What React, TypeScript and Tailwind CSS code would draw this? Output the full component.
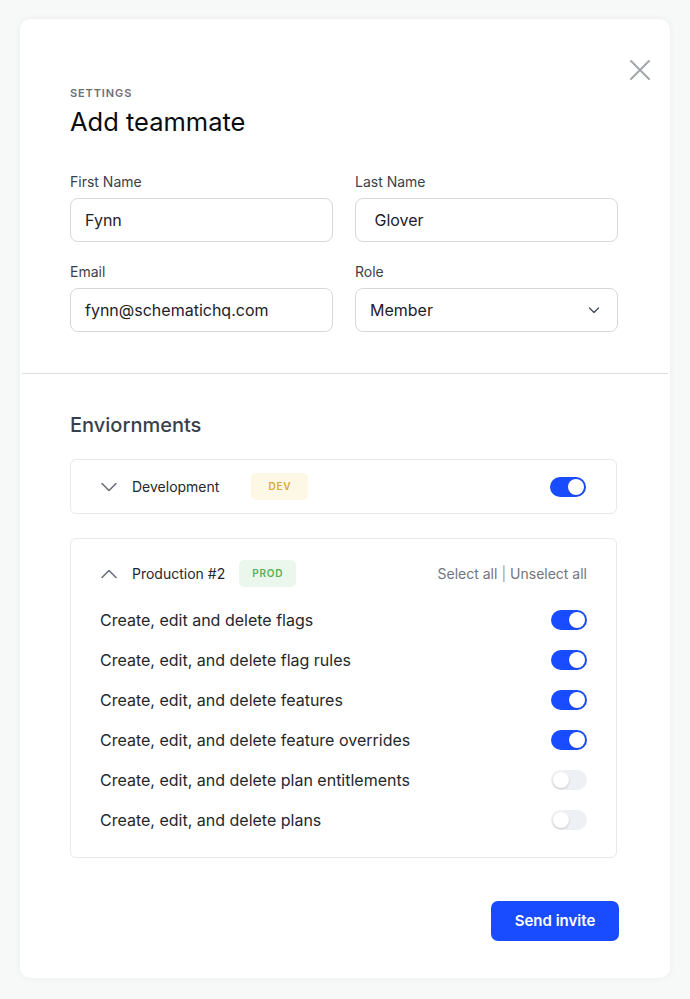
import React, { useState } from "react";

const font = { fontFamily: "Inter, 'Noto Sans', sans-serif" };

// --- Small pieces ---
const Toggle = ({ on, onClick }: { on: boolean; onClick: () => void }) => (
  <button
    onClick={onClick}
    className={`relative flex h-[20px] w-[36px] shrink-0 items-center rounded-full px-[2px] transition-colors ${
      on ? "bg-[#1a4cff] justify-end" : "bg-[#eef0f3] justify-start"
    }`}
  >
    <span className="block h-[16px] w-[16px] rounded-full bg-white shadow-[0_1px_2px_rgba(0,0,0,0.18)]" />
  </button>
);

const Chevron = ({ up }: { up?: boolean }) => (
  <svg width="18" height="18" viewBox="0 0 18 18" fill="none" className="shrink-0">
    <path
      d={up ? "M2 12.5 L9 5.5 L16 12.5" : "M2 5.5 L9 12.5 L16 5.5"}
      stroke="#6b6f7b"
      strokeWidth="1.6"
      strokeLinecap="round"
      strokeLinejoin="round"
    />
  </svg>
);

const Field = ({ label, value, select }: { label: string; value: string; select?: boolean }) => (
  <div className="flex flex-col gap-[6px]">
    <label className="text-[14px] leading-[20px] text-[#3b3f4a]">{label}</label>
    <div className="flex h-[44px] items-center justify-between rounded-[8px] border border-[#d6d8dc] bg-white pl-[14px] pr-[16px] text-[16px] text-[#1f2128]">
      <span className="whitespace-pre">{value}</span>
      {select && (
        <svg width="14" height="14" viewBox="0 0 14 14" fill="none">
          <path d="M2.5 5 L7 9.5 L11.5 5" stroke="#4b5060" strokeWidth="1.4" strokeLinecap="round" strokeLinejoin="round" />
        </svg>
      )}
    </div>
  </div>
);

const permissions = [
  "Create, edit and delete flags",
  "Create, edit, and delete flag rules",
  "Create, edit, and delete features",
  "Create, edit, and delete feature overrides",
  "Create, edit, and delete plan entitlements",
  "Create, edit, and delete plans",
];

// --- Main ---
export default function App() {
  const [devOn, setDevOn] = useState(true);
  const [perms, setPerms] = useState([true, true, true, true, false, false]);

  const flip = (i: number) => setPerms((p) => p.map((v, j) => (j === i ? !v : v)));

  return (
    <div style={font} className="min-h-screen bg-[#f7f8f8] px-[20px] pt-[19px] pb-[21px]">
      <div className="relative rounded-[10px] bg-white shadow-[0_0_6px_rgba(0,0,0,0.06)]">
        {/* close */}
        <button className="absolute right-[19px] top-[40px]">
          <svg width="22" height="22" viewBox="0 0 22 22" fill="none">
            <path d="M2 2 L20 20 M20 2 L2 20" stroke="#a3a6ad" strokeWidth="2" strokeLinecap="round" />
          </svg>
        </button>

        {/* header + form */}
        <div className="pl-[50px] pr-[52px] pt-[66px] pb-[41px]">
          <div className="text-[11px] font-semibold leading-[16px] tracking-[0.08em] text-[#6b6f78]">SETTINGS</div>
          <h1 className="mt-[5px] text-[25.5px] font-normal leading-[32px] text-[#0b0c0f]">Add teammate</h1>

          <div className="mt-[34px] grid grid-cols-2 gap-x-[22px] gap-y-[20px]">
            <Field label="First Name" value="Fynn" />
            <Field label="Last Name" value=" Glover" />
            <Field label="Email" value="fynn@schematichq.com" />
            <Field label="Role" value="Member" select />
          </div>
        </div>

        <div className="mx-[2px] h-px bg-[#dcdee1]" />

        {/* environments */}
        <div className="pl-[50px] pr-[53px] pt-[37px] pb-[37px]">
          <h2 className="text-[20px] font-medium leading-[28px] text-[#3a3f4d]">Enviornments</h2>

          <div className="mt-[20px] flex h-[55px] items-center rounded-[6px] border border-[#e8e9eb] pl-[29px] pr-[30px]">
            <Chevron />
            <span className="ml-[14px] text-[14px] text-[#25272d]">Development</span>
            <span className="ml-[32px] rounded-[5px] bg-[#fdf8e6] px-[17px] py-[6px] text-[10px] font-semibold tracking-[0.08em] text-[#d4aa3c]">
              DEV
            </span>
            <div className="ml-auto">
              <Toggle on={devOn} onClick={() => setDevOn(!devOn)} />
            </div>
          </div>

          <div className="mt-[24px] rounded-[6px] border border-[#e8e9eb] pl-[29px] pr-[29px] pt-[22px] pb-[17px]">
            <div className="flex h-[25px] items-center">
              <Chevron up />
              <span className="ml-[14px] text-[14px] text-[#25272d]">Production #2</span>
              <span className="ml-[14px] rounded-[5px] bg-[#ebf7ec] px-[13px] py-[6px] text-[10px] font-semibold tracking-[0.08em] text-[#4fb25a]">
                PROD
              </span>
              <div className="ml-auto text-[14px] text-[#72757d]">
                <button onClick={() => setPerms(perms.map(() => true))}>Select all</button>
                <span className="mx-[4px] text-[#9a9ca3]">|</span>
                <button onClick={() => setPerms(perms.map(() => false))}>Unselect all</button>
              </div>
            </div>

            <div className="mt-[14px] flex flex-col">
              {permissions.map((p, i) => (
                <div key={p} className="flex h-[40px] items-center justify-between">
                  <span className="text-[16px] text-[#25272d]">{p}</span>
                  <Toggle on={perms[i]} onClick={() => flip(i)} />
                </div>
              ))}
            </div>
          </div>

          <div className="-mr-[2px] mt-[43px] flex justify-end">
            <button className="h-[40px] w-[128px] rounded-[7px] bg-[#1a4cff] text-[15px] font-semibold text-white">
              Send invite
            </button>
          </div>
        </div>
      </div>
    </div>
  );
}
